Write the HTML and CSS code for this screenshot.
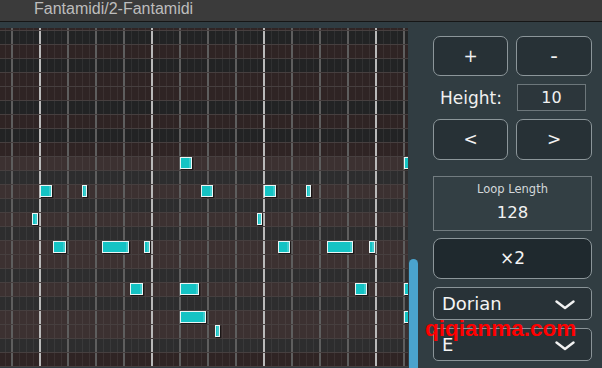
FILE: index.html
```html
<!DOCTYPE html>
<html>
<head>
<meta charset="utf-8">
<link rel="stylesheet" href="styles.css">
</head>
<body>
<div class="app">
  <header class="titlebar"><span class="title">Fantamidi/2-Fantamidi</span></header>
  <div class="main">
    <section class="roll">
      <div class="grid">
        <div class="rows">
          <div class="row w"></div>
          <div class="row b"></div>
          <div class="row w"></div>
          <div class="row b"></div>
          <div class="row w"></div>
          <div class="row w"></div>
          <div class="row b"></div>
          <div class="row w"></div>
          <div class="row b"></div>
          <div class="row w"></div>
          <div class="row in"></div>
          <div class="row out"></div>
          <div class="row in"></div>
          <div class="row out"></div>
          <div class="row in"></div>
          <div class="row out"></div>
          <div class="row in"></div>
          <div class="row in"></div>
          <div class="row out"></div>
          <div class="row in"></div>
          <div class="row out"></div>
          <div class="row in"></div>
          <div class="row in"></div>
          <div class="row out"></div>
          <div class="row w"></div>
        </div>
        <div class="note" style="left:180px;top:129px;width:12px"></div>
        <div class="note" style="left:404px;top:129px;width:12px"></div>
        <div class="note" style="left:40px;top:157px;width:12px"></div>
        <div class="note" style="left:82px;top:157px;width:5px"></div>
        <div class="note" style="left:201px;top:157px;width:12px"></div>
        <div class="note" style="left:264px;top:157px;width:12px"></div>
        <div class="note" style="left:306px;top:157px;width:5px"></div>
        <div class="note" style="left:32px;top:185px;width:6px"></div>
        <div class="note" style="left:257px;top:185px;width:5px"></div>
        <div class="note" style="left:53px;top:213px;width:13px"></div>
        <div class="note" style="left:102px;top:213px;width:27px"></div>
        <div class="note" style="left:144px;top:213px;width:6px"></div>
        <div class="note" style="left:278px;top:213px;width:12px"></div>
        <div class="note" style="left:327px;top:213px;width:26px"></div>
        <div class="note" style="left:369px;top:213px;width:6px"></div>
        <div class="note" style="left:130px;top:255px;width:13px"></div>
        <div class="note" style="left:180px;top:255px;width:19px"></div>
        <div class="note" style="left:355px;top:255px;width:12px"></div>
        <div class="note" style="left:404px;top:255px;width:12px"></div>
        <div class="note" style="left:180px;top:283px;width:26px"></div>
        <div class="note" style="left:404px;top:283px;width:12px"></div>
        <div class="note" style="left:215px;top:297px;width:5px"></div>
      </div>
    </section>
    <aside class="panel">
      <div class="track"><div class="thumb"></div></div>
      <div class="controls">
        <div class="pair">
          <button class="btn">+</button>
          <button class="btn minus">-</button>
        </div>
        <div class="height-row">
          <span class="label">Height:</span>
          <span class="field">10</span>
        </div>
        <div class="pair">
          <button class="btn">&lt;</button>
          <button class="btn">&gt;</button>
        </div>
        <div class="loop">
          <span class="loop-label">Loop Length</span>
          <span class="loop-value">128</span>
        </div>
        <button class="btn wide">×2</button>
        <div class="select first">
          <span>Dorian</span>
          <svg class="chev" width="20" height="10" viewBox="0 0 20 10"><polyline points="1.5,1.5 10,8 18.5,1.5" fill="none" stroke="#f2f2f2" stroke-width="2.4" stroke-linecap="round" stroke-linejoin="round"/></svg>
        </div>
        <div class="select">
          <span>E</span>
          <svg class="chev" width="20" height="10" viewBox="0 0 20 10"><polyline points="1.5,1.5 10,8 18.5,1.5" fill="none" stroke="#f2f2f2" stroke-width="2.4" stroke-linecap="round" stroke-linejoin="round"/></svg>
        </div>
      </div>
    </aside>
  </div>
  <div class="watermark">qiqianma.com</div>
</div>
</body>
</html>
```
FILE: styles.css
```css
* { box-sizing: border-box; }
html, body { margin: 0; padding: 0; }
body {
  width: 602px;
  height: 368px;
  overflow: hidden;
  background: #313d42;
  font-family: "DejaVu Sans", "Liberation Sans", sans-serif;
}
.app { position: relative; width: 602px; height: 368px; }
.titlebar {
  height: 22px;
  background: #3b3b3b;
  border-bottom: 1px solid #161616;
  padding-left: 34px;
}
.title {
  font-family: "Liberation Sans", Arial, sans-serif;
  font-size: 16px;
  line-height: 18px;
  color: #bdbdbd;
  display: block;
}
.main { display: flex; height: 346px; }
.roll {
  width: 408px;
  flex: none;
  padding-top: 6px;
  background: #2f3c42;
}
.grid {
  position: relative;
  height: 340px;
  overflow: hidden;
}
.rows { margin-top: -11px; display: flex; flex-direction: column; }
.row {
  height: 14px;
  border-bottom: 1px solid #463f3f;
  background-image:
    repeating-linear-gradient(to right, transparent 0 39px, #b9b9b9 39px 41px, transparent 41px 112px),
    repeating-linear-gradient(to right, transparent 0 11px, #5e5e5e 11px 13px, transparent 13px 28px),
    repeating-linear-gradient(to right, transparent 0 5px, rgba(255,255,255,0.06) 5px 6px, transparent 6px 7px);
}
.row.w { background-color: #2f2424; }
.row.b { background-color: #222324; }
.row.in { background-color: #3c3131; }
.row.out { background-color: #2d2d2e; }
.note {
  position: absolute;
  height: 12px;
  background: #14c3c4;
  border: 1px solid #eaf5f5;
  box-shadow: inset -2px 0 0 rgba(255,255,255,0.18), 1px 1px 1px rgba(0,0,0,0.55);
}
.panel { display: flex; width: 194px; flex: none; }
.track { width: 10px; flex: none; padding-left: 1px; display: flex; flex-direction: column; }
.thumb {
  margin-top: 237px;
  flex: 1;
  width: 9px;
  background: #4aa3cd;
  border-radius: 5px 5px 0 0;
}
.controls {
  margin-left: 15px;
  width: 159px;
  padding-top: 14px;
  display: flex;
  flex-direction: column;
}
.pair { display: grid; grid-template-columns: 75px 76px; gap: 8px; }
.btn {
  height: 40px;
  margin: 0;
  padding: 0;
  background: #273136;
  border: 1px solid #8c969a;
  border-radius: 7px;
  color: #f2f2f2;
  font-family: "DejaVu Sans", sans-serif;
  font-size: 17px;
  line-height: 38px;
  text-align: center;
}
.btn.minus { font-size: 21px; }
.pair + .height-row { margin-top: 8px; }
.height-row {
  display: flex;
  align-items: center;
  justify-content: space-between;
  height: 27px;
  padding-left: 7px;
  padding-right: 6px;
}
.label { color: #f0f0f0; font-size: 17px; line-height: 20px; }
.field {
  width: 69px;
  height: 27px;
  border: 1px solid #6d777b;
  background: #2c363b;
  color: #f0f0f0;
  font-size: 16px;
  line-height: 25px;
  text-align: center;
}
.height-row + .pair { margin-top: 8px; }
.height-row + .pair .btn { height: 41px; line-height: 39px; }
.loop {
  margin-top: 16px;
  height: 55px;
  border: 1px solid #727c80;
  background: #333f44;
  display: flex;
  flex-direction: column;
  align-items: center;
  padding-top: 4px;
}
.loop-label { font-size: 11.5px; line-height: 16px; color: #d4d8da; }
.loop-value { font-size: 16.5px; line-height: 22px; color: #f2f2f2; margin-top: 5px; }
.btn.wide {
  margin-top: 7px;
  height: 41px;
  width: 159px;
  background: #1f292e;
  border-radius: 8px;
  font-size: 17px;
  line-height: 39px;
}
.select {
  margin-top: 8px;
  height: 33px;
  border: 1px solid #8a9498;
  border-radius: 5px;
  background: #283237;
  display: flex;
  align-items: center;
  justify-content: space-between;
  padding-left: 8px;
  padding-right: 16px;
  color: #f4f4f4;
  font-size: 18px;
  line-height: 22px;
}
.chev { display: block; margin-top: 2px; }
.watermark {
  position: absolute;
  left: 425px;
  top: 318px;
  font-family: "Liberation Sans", Arial, sans-serif;
  font-weight: bold;
  font-size: 22.5px;
  line-height: 22px;
  color: #ff0000;
}
```
